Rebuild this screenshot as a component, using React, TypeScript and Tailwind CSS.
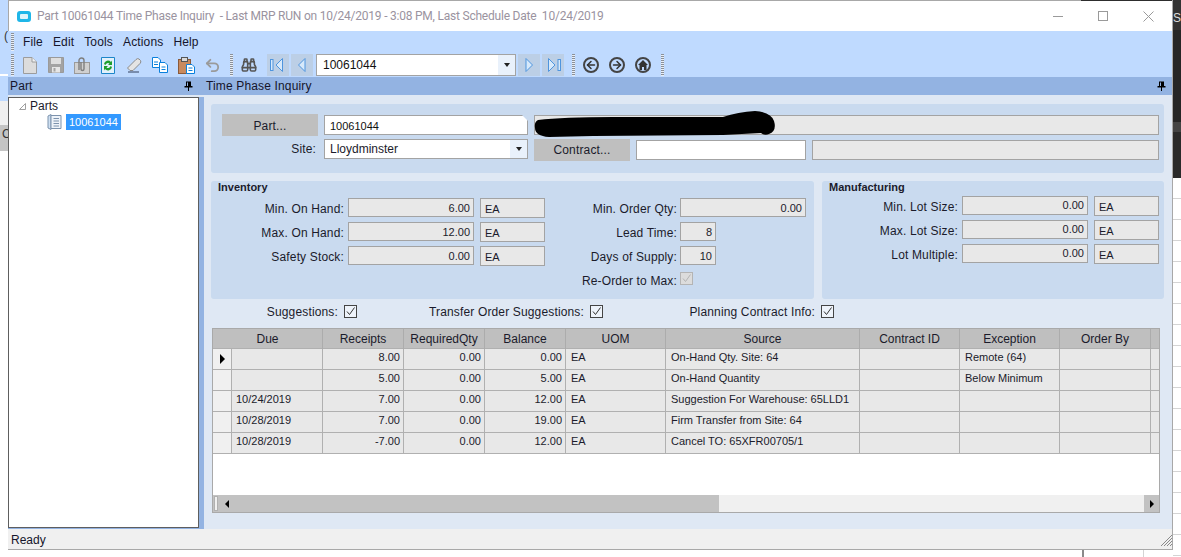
import { ArrowLeft, ArrowRight, Binoculars, Undo2 } from "lucide-react";

const gridCols = "grid grid-cols-[19px_91px_81px_81px_81px_100px_194px_100px_100px_91px_8px]";

const rows = [
  { due: "", receipts: "8.00", required: "0.00", balance: "0.00", uom: "EA", source: "On-Hand Qty. Site: 64", exception: "Remote (64)" },
  { due: "", receipts: "5.00", required: "0.00", balance: "5.00", uom: "EA", source: "On-Hand Quantity", exception: "Below Minimum" },
  { due: "10/24/2019", receipts: "7.00", required: "0.00", balance: "12.00", uom: "EA", source: "Suggestion For Warehouse: 65LLD1", exception: "" },
  { due: "10/28/2019", receipts: "7.00", required: "0.00", balance: "19.00", uom: "EA", source: "Firm Transfer from Site: 64", exception: "" },
  { due: "10/28/2019", receipts: "-7.00", required: "0.00", balance: "12.00", uom: "EA", source: "Cancel TO: 65XFR00705/1", exception: "" },
];

const headers = ["Receipts", "RequiredQty", "Balance", "UOM", "Source", "Contract ID", "Exception", "Order By", ""];

const Grip = () => (
  <div className="w-[3px] h-full bg-[repeating-linear-gradient(to_bottom,#8a9099_0px,#8a9099_1px,#e8eef6_1px,#e8eef6_2px)]" />
);

const ToolIcon = ({ children }: { children: React.ReactNode }) => (
  <div className="w-[26px] h-[22px] flex items-center justify-center shrink-0">{children}</div>
);

const NavButton = ({ dir, bar }: { dir: "left" | "right"; bar?: boolean }) => (
  <div className="w-[22px] h-[22px] bg-[#bccfe6] flex items-center justify-center shrink-0">
    <svg width="16" height="16" viewBox="0 0 16 16">
      {dir === "left" ? (
        <>
          {bar && <rect x="0.5" y="2.5" width="2.5" height="11" fill="#d7e9fb" stroke="#4f95de" />}
          <path d={bar ? "M12.5 1.5 L6 8 L12.5 14.5 Z" : "M11 1.5 L4.5 8 L11 14.5 Z"} fill="#d7e9fb" stroke="#4f95de" />
        </>
      ) : (
        <>
          <path d={bar ? "M3.5 1.5 L10 8 L3.5 14.5 Z" : "M5 1.5 L11.5 8 L5 14.5 Z"} fill="#d7e9fb" stroke="#4f95de" />
          {bar && <rect x="13" y="2.5" width="2.5" height="11" fill="#d7e9fb" stroke="#4f95de" />}
        </>
      )}
    </svg>
  </div>
);

const Pin = () => (
  <svg width="9" height="10" viewBox="0 0 9 10" className="shrink-0">
    <path d="M2 0.5 H7 V5 H8.5 V6.5 H5 V10 H4 V6.5 H0.5 V5 H2 Z M3 1.5 V5 H4 V1.5 Z" fill="#000" fillRule="evenodd" />
  </svg>
);

const Check = ({ disabled }: { disabled?: boolean }) => (
  <div className={`w-[13px] h-[13px] border flex items-center justify-center shrink-0 ${disabled ? "border-[#b4b4b4] bg-[#dcdcdc]" : "border-[#444] bg-[#eef3fa]"}`}>
    <svg width="11" height="11" viewBox="0 0 11 11">
      <path d="M2 5.5 L4.5 8.5 L9.5 1.5" fill="none" stroke={disabled ? "#b4b4b4" : "#333"} strokeWidth="1" />
    </svg>
  </div>
);

const ReadOnly = ({ value, className }: { value?: string; className: string }) => (
  <div className={`border border-[#a3a3a3] bg-[#e8e8e8] text-right pr-[3px] text-[11px] tracking-normal ${className}`}>{value}</div>
);

const Unit = ({ className = "w-[65px]" }: { className?: string }) => (
  <div className={`h-[20px] border border-[#a3a3a3] bg-[#e8e8e8] pl-[4px] leading-[21px] text-[11px] tracking-normal ${className}`}>EA</div>
);

const Label = ({ text, className }: { text: string; className: string }) => (
  <div className={`text-right whitespace-nowrap leading-[23px] shrink-0 ${className}`}>{text}</div>
);

const CheckOption = ({ text, width }: { text: string; width: string }) => (
  <>
    <Label text={text} className={`${width} mt-[2px]`} />
    <div className="ml-[6px] mt-[6px]">
      <Check />
    </div>
  </>
);

export default function App() {
  return (
    <div className="w-[1181px] h-[557px] flex overflow-hidden bg-white text-[12px] tracking-[0.15px] text-[#1b1b2b] font-['Liberation_Sans',Arial,sans-serif]">
      {/* desktop behind the window, left side */}
      <div className="w-[8px] h-full flex flex-col shrink-0 overflow-hidden text-[#333]">
        <div className="h-[74px] bg-[#bfdaff] pt-[28px] pl-[4px] leading-[16px]">(</div>
        <div className="h-[2px] bg-white" />
        <div className="h-[25px] bg-[#bfdaff]" />
        <div className="h-[24px] bg-[#f0f0f0]" />
        <div className="h-[26px] bg-[#c4c4c4] pl-[2px] leading-[16px] pt-[1px]">C</div>
        <div className="flex-1 bg-white" />
      </div>

      <div className="w-[1165px] h-full flex flex-col shrink-0">
        <div className="h-[550px] flex flex-col bg-white border-r border-b border-[#a8a8a8] shadow-[inset_1px_0_0_#a8a8a8]">
          <div className="h-px flex shrink-0">
            <div className="flex-1 bg-[#a8a8a8]" />
            <div className="w-[91px] bg-[#2d2d2d]" />
          </div>

          {/* title bar */}
          <div className="h-[30px] flex items-center shrink-0 text-[#9a93a0] tracking-[-0.22px]">
            <div className="ml-[9px] w-[14px] h-[11px] rounded-[3px] bg-[#1fb6e8] flex items-center justify-center">
              <div className="w-[8px] h-[5px] rounded-[1px] bg-[#dff4fb]" />
            </div>
            <div className="ml-[6px] whitespace-pre font-['Roboto',sans-serif]">Part 10061044 Time Phase Inquiry  - Last MRP RUN on 10/24/2019 - 3:08 PM, Last Schedule Date  10/24/2019</div>
            <div className="ml-auto flex items-center mr-[18px] gap-[35px]">
              <div className="w-[10px] h-px bg-[#9a9a9a]" />
              <div className="w-[10px] h-[10px] border border-[#9a9a9a]" />
              <svg width="11" height="11" viewBox="0 0 11 11">
                <path d="M0.5 0.5 L10.5 10.5 M10.5 0.5 L0.5 10.5" stroke="#9a9a9a" strokeWidth="1" />
              </svg>
            </div>
          </div>

          {/* menu and toolbar */}
          <div className="h-[46px] bg-[#bfdaff] shrink-0 flex flex-col">
            <div className="h-[22px] flex items-center pl-[3px]">
              <div className="h-[18px]">
                <Grip />
              </div>
              <div className="ml-[9px] flex gap-[10px] text-[#15152b]">
                <span>File</span>
                <span>Edit</span>
                <span>Tools</span>
                <span>Actions</span>
                <span>Help</span>
              </div>
            </div>
            <div className="h-[24px] flex items-center pl-[3px]">
              <div className="h-[22px]">
                <Grip />
              </div>
              <div className="ml-[3px] flex items-center">
                <ToolIcon>
                  <svg width="14" height="17" viewBox="0 0 14 17">
                    <path d="M0.5 0.5 H9 L13.5 5 V16.5 H0.5 Z" fill="#dcdcdc" stroke="#9c9c9c" />
                    <path d="M9 0.5 V5 H13.5" fill="#f2f2f2" stroke="#9c9c9c" />
                  </svg>
                </ToolIcon>
                <ToolIcon>
                  <svg width="16" height="16" viewBox="0 0 16 16">
                    <path d="M0.5 0.5 H15.5 V15.5 H0.5 Z" fill="#a3a3a3" stroke="#9a9a9a" />
                    <rect x="3" y="1" width="10" height="6" fill="#dedede" />
                    <rect x="4" y="10" width="8" height="5.5" fill="#e6e6e6" />
                    <rect x="5.5" y="11" width="2" height="3.5" fill="#a3a3a3" />
                  </svg>
                </ToolIcon>
                <ToolIcon>
                  <svg width="16" height="17" viewBox="0 0 16 17">
                    <rect x="0.5" y="5.5" width="15" height="11" fill="#d0d0d0" stroke="#9a9a9a" />
                    <path d="M5 13 V3.5 A2.5 2.5 0 0 1 10 3.5 V12 A1.5 1.5 0 0 1 7 12 V5" fill="none" stroke="#7f7f7f" strokeWidth="1.4" />
                  </svg>
                </ToolIcon>
                <ToolIcon>
                  <svg width="14" height="17" viewBox="0 0 14 17">
                    <path d="M0.5 0.5 H13.5 V16.5 H0.5 Z" fill="#e3f1fb" stroke="#1d86c9" />
                    <path d="M3 7 A4 4 0 0 1 10 5 L11 3.5 V8 H7 L8.5 6.5 A2.5 2.5 0 0 0 4.5 8 Z" fill="#1e9e2e" />
                    <path d="M11 10 A4 4 0 0 1 4 12 L3 13.5 V9 H7 L5.5 10.5 A2.5 2.5 0 0 0 9.5 9 Z" fill="#1e9e2e" />
                  </svg>
                </ToolIcon>
                <ToolIcon>
                  <svg width="15" height="15" viewBox="0 0 15 15">
                    <path d="M0.5 10 L9 1.5 Q10.5 0 12 1 L13.5 2.5 Q14.5 4 13 5.5 L6 12.5 H3 Z" fill="#e4e4e4" stroke="#8a8a8a" />
                    <path d="M1 14 H12" stroke="#33415e" strokeWidth="1" />
                  </svg>
                </ToolIcon>
                <ToolIcon>
                  <svg width="16" height="16" viewBox="0 0 16 16">
                    <path d="M0.5 0.5 H6 L8.5 3 V10.5 H0.5 Z" fill="#fff" stroke="#0a80dc" />
                    <path d="M7.5 5.5 H13 L15.5 8 V15.5 H7.5 Z" fill="#fff" stroke="#0a80dc" />
                    <path d="M9.5 10 H13.5 M9.5 12.5 H13.5 M2 5 H6 M2 7.5 H6" stroke="#0a80dc" />
                  </svg>
                </ToolIcon>
                <ToolIcon>
                  <svg width="17" height="17" viewBox="0 0 17 17">
                    <rect x="0.5" y="2.5" width="12" height="14" fill="#c98a5e" stroke="#8a5a3a" />
                    <rect x="3.5" y="0.5" width="6" height="4" fill="#d9d9d9" stroke="#555" />
                    <path d="M8.5 7.5 H14 L16.5 10 V16.5 H8.5 Z" fill="#fff" stroke="#0a80dc" />
                    <path d="M10.5 11 H14.5 M10.5 13.5 H14.5" stroke="#0a80dc" />
                  </svg>
                </ToolIcon>
                <ToolIcon>
                  <Undo2 size={17} strokeWidth={2.6} color="#9a9a9a" />
                </ToolIcon>
              </div>
              <div className="ml-[5px] h-[22px]">
                <Grip />
              </div>
              <div className="ml-[3px] mr-[5px]">
                <ToolIcon>
                  <Binoculars size={16} strokeWidth={2.4} color="#555" />
                </ToolIcon>
              </div>
              <div className="flex items-center gap-[2px]">
                <NavButton dir="left" bar />
                <NavButton dir="left" />
              </div>
              <div className="ml-[3px] w-[200px] h-[22px] border border-[#a3a3a3] bg-white flex items-center shrink-0">
                <span className="pl-[6px] text-[#111] tracking-normal">10061044</span>
                <div className="ml-auto w-[17px] h-full bg-[#e9f1fb] flex items-center justify-center">
                  <div className="border-t-[4px] border-x-[3px] border-x-transparent border-t-[#222]" />
                </div>
              </div>
              <div className="ml-[2px] flex items-center gap-[2px]">
                <NavButton dir="right" />
                <NavButton dir="right" bar />
              </div>
              <div className="ml-[8px] h-[22px]">
                <Grip />
              </div>
              <div className="ml-[8px] flex items-center gap-[10px]">
                <div className="w-[16px] h-[16px] rounded-full border-2 border-[#444] flex items-center justify-center">
                  <ArrowLeft size={12} strokeWidth={3} color="#333" />
                </div>
                <div className="w-[16px] h-[16px] rounded-full border-2 border-[#444] flex items-center justify-center">
                  <ArrowRight size={12} strokeWidth={3} color="#333" />
                </div>
                <div className="w-[16px] h-[16px] rounded-full border-2 border-[#444] flex items-center justify-center">
                  <svg width="10" height="10" viewBox="0 0 10 10">
                    <path d="M5 0 L10 5 H8.5 V10 H6 V7 H4 V10 H1.5 V5 H0 Z" fill="#333" />
                  </svg>
                </div>
              </div>
              <div className="ml-[10px] h-[22px]">
                <Grip />
              </div>
            </div>
          </div>

          {/* dock headers */}
          <div className="h-[18px] bg-[#93b3e2] flex items-center shrink-0 text-[#15152b]">
            <div className="w-[190px] pl-[2px] flex items-center justify-between shrink-0">
              <span>Part</span>
              <div className="mr-[5px]">
                <Pin />
              </div>
            </div>
            <span className="ml-[8px]">Time Phase Inquiry</span>
            <div className="ml-auto mr-[6px]">
              <Pin />
            </div>
          </div>

          {/* main */}
          <div className="flex-1 min-h-0 flex">
            {/* tree */}
            <div className="w-[196px] shrink-0 pt-[2px] bg-[#93b3e2] pr-[5px] shadow-[inset_0_2px_0_#dfe8f4]">
              <div className="h-[431px] border border-[#5e5e5e] bg-white pl-[10px] tracking-normal">
                <div className="flex items-center h-[16px]">
                  <svg width="7" height="7" viewBox="0 0 7 7">
                    <path d="M6.5 0.5 V6.5 H0.5 Z" fill="#fff" stroke="#a0a0a0" />
                  </svg>
                  <span className="ml-[4px]">Parts</span>
                </div>
                <div className="flex items-center h-[16px] ml-[27px]">
                  <svg width="16" height="16" viewBox="0 0 16 16">
                    <path d="M2 2 L5 0.5 V15.5 L2 14 Z" fill="#cfe0f2" stroke="#7d93ad" />
                    <path d="M5 1.5 H15 V14.5 H5 Z" fill="#eef3f9" stroke="#7d93ad" />
                    <path d="M7.5 4.5 H13 M7.5 7 H13 M7.5 9.5 H13 M7.5 12 H13" stroke="#7d93ad" />
                  </svg>
                  <div className="ml-[4px] w-[55px] h-[16px] bg-[#3399ff] text-white pl-[3px] leading-[16px] text-[11px]">10061044</div>
                </div>
              </div>
            </div>

            {/* content */}
            <div className="flex-1 min-w-0 bg-[#dfe8f4] pl-[7px] pr-[8px] pt-[9px]">
              <div className="relative h-[69px] rounded-[3px] bg-[#c9daef] pl-[11px] pr-[5px] pt-[10px] grid grid-cols-[96px_204px_96px_170px_347px] gap-x-[6px] grid-rows-[24px_22px] gap-y-px">
                <div className="h-[22px] bg-[#bfbfbf] flex items-center justify-center pt-px">Part...</div>
                <div className="relative h-[20px] mt-px border border-[#a3a3a3] bg-white pl-[5px] leading-[20px] text-[#111] text-[11px] tracking-normal">
                  10061044
                  <div className="absolute -top-px -right-px border-t-[6px] border-l-[6px] border-t-[#c9daef] border-l-transparent" />
                </div>
                <div className="col-span-3 h-[20px] mt-px border border-[#a3a3a3] bg-[#e8e8e8]" />
                <div className="relative">
                  <Label text="Site:" className="absolute right-[2px] -top-[1px]" />
                </div>
                <div className="h-[20px] border border-[#a3a3a3] bg-white flex items-center pl-[5px] tracking-normal">
                  Lloydminster
                  <div className="ml-auto w-[17px] h-full bg-[#e9f1fb] flex items-center justify-center">
                    <div className="border-t-[4px] border-x-[3px] border-x-transparent border-t-[#222]" />
                  </div>
                </div>
                <div className="h-[22px] bg-[#bfbfbf] flex items-center justify-center">Contract...</div>
                <div className="h-[20px] mt-px border border-[#a3a3a3] bg-white" />
                <div className="h-[20px] mt-px border border-[#a3a3a3] bg-[#e8e8e8]" />
                {/* blacked out description */}
                <svg width="244" height="26" viewBox="0 0 244 26" className="absolute left-[322px] top-[7px]">
                  <path d="M5 9 Q30 6 80 6 L190 6 Q205 1 222 0 Q238 1 241 10 Q244 20 236 23 Q232 25 228 22 L190 24 L60 25 L16 26 Q2 25 2 17 Q1 11 5 9 Z" fill="#000" />
                </svg>
              </div>

              <div className="mt-[8px] h-[118px] flex gap-[8px]">
                <div className="w-[603px] rounded-[3px] bg-[#c9daef] pt-[1px]">
                  <div className="pl-[7px] h-[16px] font-bold leading-[11px] text-[11px] tracking-normal">Inventory</div>
                  <div className="flex flex-col">
                    <div className="h-[24px] flex">
                      <Label text="Min. On Hand:" className="w-[133px]" />
                      <ReadOnly value="6.00" className="ml-[4px] w-[126px] h-[19px] leading-[18px]" />
                      <Unit className="ml-[6px] w-[65px]" />
                      <Label text="Min. Order Qty:" className="w-[132px]" />
                      <ReadOnly value="0.00" className="ml-[3px] w-[126px] h-[19px] leading-[18px]" />
                    </div>
                    <div className="h-[24px] flex">
                      <Label text="Max. On Hand:" className="w-[133px]" />
                      <ReadOnly value="12.00" className="ml-[4px] w-[126px] h-[19px] leading-[18px]" />
                      <Unit className="ml-[6px] w-[65px]" />
                      <Label text="Lead Time:" className="w-[132px]" />
                      <ReadOnly value="8" className="ml-[3px] w-[36px] h-[19px] leading-[18px]" />
                    </div>
                    <div className="h-[24px] flex">
                      <Label text="Safety Stock:" className="w-[133px]" />
                      <ReadOnly value="0.00" className="ml-[4px] w-[126px] h-[19px] leading-[18px]" />
                      <Unit className="ml-[6px] w-[65px]" />
                      <Label text="Days of Supply:" className="w-[132px]" />
                      <ReadOnly value="10" className="ml-[3px] w-[36px] h-[19px] leading-[18px]" />
                    </div>
                    <div className="h-[24px] flex pl-[334px]">
                      <Label text="Re-Order to Max:" className="w-[132px]" />
                      <div className="ml-[3px] mt-[2px]">
                        <Check disabled />
                      </div>
                    </div>
                  </div>
                </div>
                <div className="w-[342px] rounded-[3px] bg-[#c9daef] pt-[1px]">
                  <div className="pl-[7px] h-[14px] font-bold leading-[11px] text-[11px] tracking-normal">Manufacturing</div>
                  {[
                    ["Min. Lot Size:", "0.00"],
                    ["Max. Lot Size:", "0.00"],
                    ["Lot Multiple:", "0.00"],
                  ].map(([label, value]) => (
                    <div key={label} className="h-[24px] flex">
                      <Label text={label} className="w-[136px]" />
                      <ReadOnly value={value} className="ml-[4px] w-[126px] h-[19px] leading-[16px]" />
                      <Unit className="ml-[6px] w-[65px]" />
                    </div>
                  ))}
                </div>
              </div>

              <div className="h-[29px] flex items-start">
                <CheckOption text="Suggestions:" width="w-[127px]" />
                <CheckOption text="Transfer Order Suggestions:" width="w-[227px]" />
                <CheckOption text="Planning Contract Info:" width="w-[212px]" />
              </div>

              {/* grid */}
              <div className="ml-px w-[948px] h-[185px] border border-[#a9a9a9] bg-white flex flex-col tracking-normal">
                <div className={`${gridCols} h-[20px] bg-[#bfbfbf] border-b border-[#b0b0b0] shrink-0`}>
                  <div className="col-span-2 border-r border-[#acacac] text-center leading-[21px]">Due</div>
                  {headers.map((text, i) => (
                    <div key={i} className="border-r last:border-r-0 border-[#acacac] text-center leading-[21px]">
                      {text}
                    </div>
                  ))}
                </div>
                {rows.map((row, i) => (
                  <div key={i} className={`${gridCols} h-[21px] border-b border-[#b0b0b0] bg-[#e8e8e8] shrink-0 leading-[17px] text-[11px]`}>
                    <div className="border-r border-[#b0b0b0] bg-[#f0f0f0] flex items-center pl-[7px]">
                      {i === 0 && <div className="border-y-[5px] border-l-[5px] border-y-transparent border-l-black" />}
                    </div>
                    <div className="border-r border-[#b0b0b0] pl-[4px]">{row.due}</div>
                    <div className="border-r border-[#b0b0b0] text-right pr-[3px]">{row.receipts}</div>
                    <div className="border-r border-[#b0b0b0] text-right pr-[3px]">{row.required}</div>
                    <div className="border-r border-[#b0b0b0] text-right pr-[3px]">{row.balance}</div>
                    <div className="border-r border-[#b0b0b0] pl-[5px]">{row.uom}</div>
                    <div className="border-r border-[#b0b0b0] pl-[5px] whitespace-nowrap">{row.source}</div>
                    <div className="border-r border-[#b0b0b0]" />
                    <div className="border-r border-[#b0b0b0] pl-[5px]">{row.exception}</div>
                    <div className="border-r border-[#b0b0b0]" />
                    <div />
                  </div>
                ))}
                <div className="flex-1 bg-white" />
                <div className="h-[17px] flex shrink-0 bg-[#f0f0f0]">
                  <div className="w-[506px] bg-[#c2c2c2] flex items-center">
                    <div className="ml-px w-[4px] h-[15px] bg-[#f0f0f0] border border-[#b0b0b0]" />
                    <div className="ml-[7px] border-y-[4px] border-r-[4px] border-y-transparent border-r-black" />
                  </div>
                  <div className="ml-auto w-[15px] bg-[#c2c2c2] flex items-center justify-center">
                    <div className="border-y-[4px] border-l-[4px] border-y-transparent border-l-black" />
                  </div>
                </div>
              </div>
            </div>
          </div>

          {/* status bar */}
          <div className="h-[20px] bg-[#f0f0f0] flex items-center pl-[3px] pt-[2px] shrink-0 tracking-normal">
            <span className="text-[#15152b]">Ready</span>
            <svg width="12" height="12" viewBox="0 0 12 12" className="ml-auto">
              <path d="M1 12 L12 1 M4 12 L12 4 M7 12 L12 7 M10 12 L12 10" stroke="#8a8a8a" strokeWidth="1" />
            </svg>
          </div>
        </div>
        <div className="flex-1 flex justify-end">
          <div className="w-[91px] border-l-2 border-[#8a8a8a] flex justify-end">
            <div className="w-[30px] border-l border-[#d4d4d4]" />
          </div>
        </div>
      </div>

      {/* spreadsheet behind the window, right side */}
      <div className="w-[8px] h-full flex flex-col shrink-0 overflow-hidden">
        <div className="h-[30px] bg-[#333] pt-[11px] text-[#ddd] leading-[14px]">S</div>
        <div className="h-[92px] bg-[#262626]" />
        <div className="h-[10px] bg-[#444]" />
        <div className="h-[46px] bg-[#2a2a2a]" />
        <div className="flex-1 bg-[repeating-linear-gradient(to_bottom,#ffffff_0px,#ffffff_20px,#d4d4d4_20px,#d4d4d4_21px)]" />
      </div>
    </div>
  );
}
